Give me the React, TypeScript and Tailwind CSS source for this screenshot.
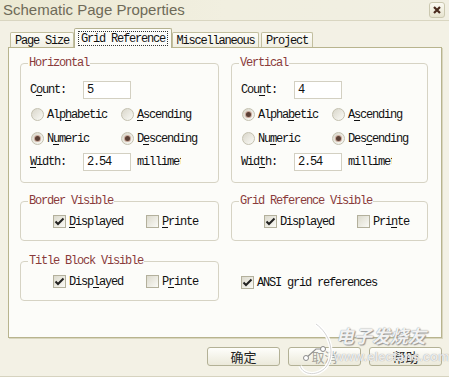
import React from 'react';

const MONO = "font-['Liberation_Mono',monospace] text-[12px] leading-[12px] tracking-[-1.2px] text-[#111]";

// label with an underlined access key
function Mn({ t, i }: { t: string; i?: number }) {
  if (i === undefined) return <span>{t}</span>;
  return (
    <span>
      {t.slice(0, i)}
      <span className="underline underline-offset-[2px] decoration-1">{t[i]}</span>
      {t.slice(i + 1)}
    </span>
  );
}

function Radio({ on }: { on?: boolean }) {
  return (
    <span className="w-[13px] h-[13px] rounded-full border border-[#c4c1b0] bg-gradient-to-br from-[#d9d6ca] to-[#fbfbf7] flex items-center justify-center shrink-0">
      {on && <span className="w-[5px] h-[5px] rounded-full bg-[#5a3e34] shadow-[0_0_0_1px_#c9a89a]" />}
    </span>
  );
}

function Check({ on }: { on?: boolean }) {
  return (
    <span className="w-[13px] h-[13px] border border-[#b3b09c] bg-gradient-to-br from-[#dcdacd] to-[#fafaf6] flex items-center justify-center shrink-0">
      {on && (
        <svg width="11" height="11" viewBox="0 0 11 11">
          <path d="M1.5 5.5 L4 8 L9.5 2.5" stroke="#222" strokeWidth="2" fill="none" />
        </svg>
      )}
    </span>
  );
}

function Field({ value }: { value: string }) {
  return (
    <span className="w-[48px] h-[18px] border border-[#d3d0c2] bg-white flex items-center pl-[3px]">{value}</span>
  );
}

function Group({ title, width, children, pt, pb }: { title: string; width: string; children: React.ReactNode; pt: string; pb: string }) {
  return (
    <fieldset className={`${width} border border-[#d6d3c4] rounded-[4px] p-0 m-0 min-w-0`}>
      <legend className="ml-[7px] px-[1px] h-[12px] text-[#8a3b3b]">{title}</legend>
      <div className={`${pt} ${pb} pl-[9px]`}>{children}</div>
    </fieldset>
  );
}

interface AxisProps {
  title: string;
  width: string;
  count: string;
  countKey: number;
  alpha: boolean;
  keys: number[];
}

function Axis({ title, width, count, countKey, alpha, keys }: AxisProps) {
  return (
    <Group title={title} width={width} pt="pt-[9px]" pb="pb-[8px]">
      <div className="h-[24px] flex items-center">
        <span className="w-[53px]"><Mn t="Count:" i={countKey} /></span>
        <Field value={count} />
      </div>
      <div className="h-[24px] flex items-center pt-[1px]">
        <span className="w-[91px] pl-[1px] flex items-center gap-[3px]"><Radio on={alpha} /><Mn t="Alphabetic" i={keys[0]} /></span>
        <span className="flex items-center gap-[3px]"><Radio /><Mn t="Ascending" i={keys[1]} /></span>
      </div>
      <div className="h-[24px] flex items-center pt-[1px]">
        <span className="w-[91px] pl-[1px] flex items-center gap-[3px]"><Radio on={!alpha} /><Mn t="Numeric" i={keys[2]} /></span>
        <span className="flex items-center gap-[3px]"><Radio on /><Mn t="Descending" i={keys[3]} /></span>
      </div>
      <div className="h-[24px] flex items-center">
        <span className="w-[53px]"><Mn t="Width:" i={keys[4]} /></span>
        <Field value="2.54" />
        <span className="ml-[6px] w-[44px] overflow-hidden whitespace-nowrap">millimet</span>
      </div>
    </Group>
  );
}

function Visible({ title, width, keys }: { title: string; width: string; keys: number[] }) {
  return (
    <Group title={title} width={width} pt="pt-[8px]" pb="pb-[12px]">
      <div className="h-[13px] flex items-center pl-[23px]">
        <span className="w-[93px] flex items-center gap-[3px]"><Check on /><Mn t="Displayed" i={keys[0]} /></span>
        <span className="flex items-center gap-[3px]"><Check /><Mn t="Printe" i={keys[1]} /></span>
      </div>
    </Group>
  );
}

export default function App() {
  const tabs = [
    { label: 'Page Size', w: 'w-[64px]' },
    { label: 'Grid Reference', w: 'w-[98px]', active: true },
    { label: 'Miscellaneous', w: 'w-[87px]' },
    { label: 'Project', w: 'w-[52px] ml-[2px]' },
  ];

  return (
    <div className="relative w-[449px] h-[377px] overflow-hidden bg-[#f3f1e5] border-b border-[#d6d3bf]">
      {/* title bar */}
      <div className="h-[21px] flex items-center justify-between pl-[3px] pr-[4px] bg-gradient-to-r from-[#ece9d3] via-[#f1efe0] to-[#f1efe2] border-b border-[#d9d6c1]">
        <span className="font-['Liberation_Sans',Arial,sans-serif] text-[15px] text-[#6e6a58] leading-none -mt-[2px]">
          Schematic Page Properties
        </span>
        <span className="w-[16px] h-[16px] rounded-[3px] border border-[#cbc8b0] bg-gradient-to-b from-[#fbfaf2] to-[#e7e4cf] flex items-center justify-center -mt-[1px]">
          <svg width="8" height="8" viewBox="0 0 8 8">
            <path d="M1 1 L7 7 M7 1 L1 7" stroke="#4a2b1e" strokeWidth="2.2" />
          </svg>
        </span>
      </div>

      <div className={`pl-[8px] pt-[7px] ${MONO}`}>
        {/* tabs */}
        <div className="h-[19px] flex items-end pl-[2px]">
          {tabs.map((t) =>
            t.active ? (
              <div key={t.label} className={`${t.w} h-[20px] -mb-[1px] relative z-10 bg-[#fcfcf9] border border-b-0 border-[#b5b290] rounded-t-[2px] flex items-center justify-center`}>
                <span className="border border-dotted border-[#333] px-[2px] h-[15px] flex items-center">{t.label}</span>
              </div>
            ) : (
              <div key={t.label} className={`${t.w} h-[15px] bg-gradient-to-b from-[#fdfdf8] to-[#f1efe3] border border-b-0 border-[#c2bf9f] rounded-t-[2px] flex items-center justify-center pt-[2px]`}>
                {t.label}
              </div>
            )
          )}
        </div>

        {/* tab panel */}
        <div className="w-[434px] h-[291px] bg-[#fcfcf9] border border-[#b8b48e] shadow-[1px_1px_0_#d9d6bf] pl-[11px] pt-[9px]">
          <div className="grid grid-cols-[199px_197px] gap-x-[12px]">
            <Axis title="Horizontal" width="w-[199px]" count="5" countKey={1} alpha={false} keys={[3, 0, 1, 1, 0]} />
            <Axis title="Vertical" width="w-[197px]" count="4" countKey={3} alpha keys={[5, 1, 2, 3, 3]} />

            <div className="mt-[12px]"><Visible title="Border Visible" width="w-[199px]" keys={[0, 0]} /></div>
            <div className="mt-[12px]"><Visible title="Grid Reference Visible" width="w-[197px]" keys={[6, 3]} /></div>

            <div className="mt-[14px]">
              <Group title="Title Block Visible" width="w-[199px]" pt="pt-[8px]" pb="pb-[12px]">
                <div className="h-[13px] flex items-center pl-[23px]">
                  <span className="w-[93px] flex items-center gap-[3px]"><Check on /><Mn t="Displayed" i={4} /></span>
                  <span className="flex items-center gap-[3px]"><Check /><Mn t="Printe" i={1} /></span>
                </div>
              </Group>
            </div>
            <div className="mt-[14px] pt-[21px] pl-[10px]">
              <span className="flex items-center gap-[3px]"><Check on />ANSI grid references</span>
            </div>
          </div>
        </div>

        {/* buttons */}
        <div className="w-[434px] flex justify-end gap-[8px] mt-[9px] font-['Noto_Sans_CJK_SC',sans-serif] text-[13px] tracking-normal">
          {['确定', '取消', '帮助'].map((b, i) => (
            <button
              key={b}
              className={`w-[73px] h-[19px] rounded-[3px] border border-[#b3b196] bg-gradient-to-b from-[#fefefb] to-[#ebe9da] flex items-center justify-center leading-none ${i === 1 ? 'text-[#a5a39a]' : 'text-[#222]'}`}
            >
              {b}
            </button>
          ))}
        </div>
      </div>

      {/* site watermark over the buttons */}
      <div className="absolute left-[296px] top-[322px] w-[153px] h-[55px] pointer-events-none">
        <svg width="40" height="55" viewBox="0 0 40 55" className="absolute left-0 top-0">
          <path d="M20 2 C34 12 40 32 30 45 C22 54 8 54 4 44" stroke="#ffffff" strokeWidth="3.5" fill="none" opacity="0.95" />
          <path d="M20 2 C34 12 40 32 30 45 C22 54 8 54 4 44" stroke="#c2c2c2" strokeWidth="1" fill="none" opacity="0.7" />
          <path d="M10 36 L20 27 L27 27" stroke="#8f8f8f" strokeWidth="1.2" fill="none" />
          <circle cx="10" cy="36" r="2.5" fill="#fff" stroke="#8a8a8a" />
          <circle cx="27" cy="27" r="2.5" fill="#fff" stroke="#8a8a8a" />
        </svg>
        <span className="absolute left-[40px] top-[4px] font-['Noto_Sans_CJK_SC',sans-serif] italic font-bold text-[18px] leading-none text-white/90 [text-shadow:0_0_1px_#777,1px_1px_1px_#999]">
          电子发烧友
        </span>
        <span className="absolute left-[38px] top-[28px] font-['Liberation_Sans',sans-serif] font-bold text-[13px] leading-none text-white/80 [text-shadow:0_0_1px_#888]">
          www.elecfans.com
        </span>
      </div>
    </div>
  );
}
